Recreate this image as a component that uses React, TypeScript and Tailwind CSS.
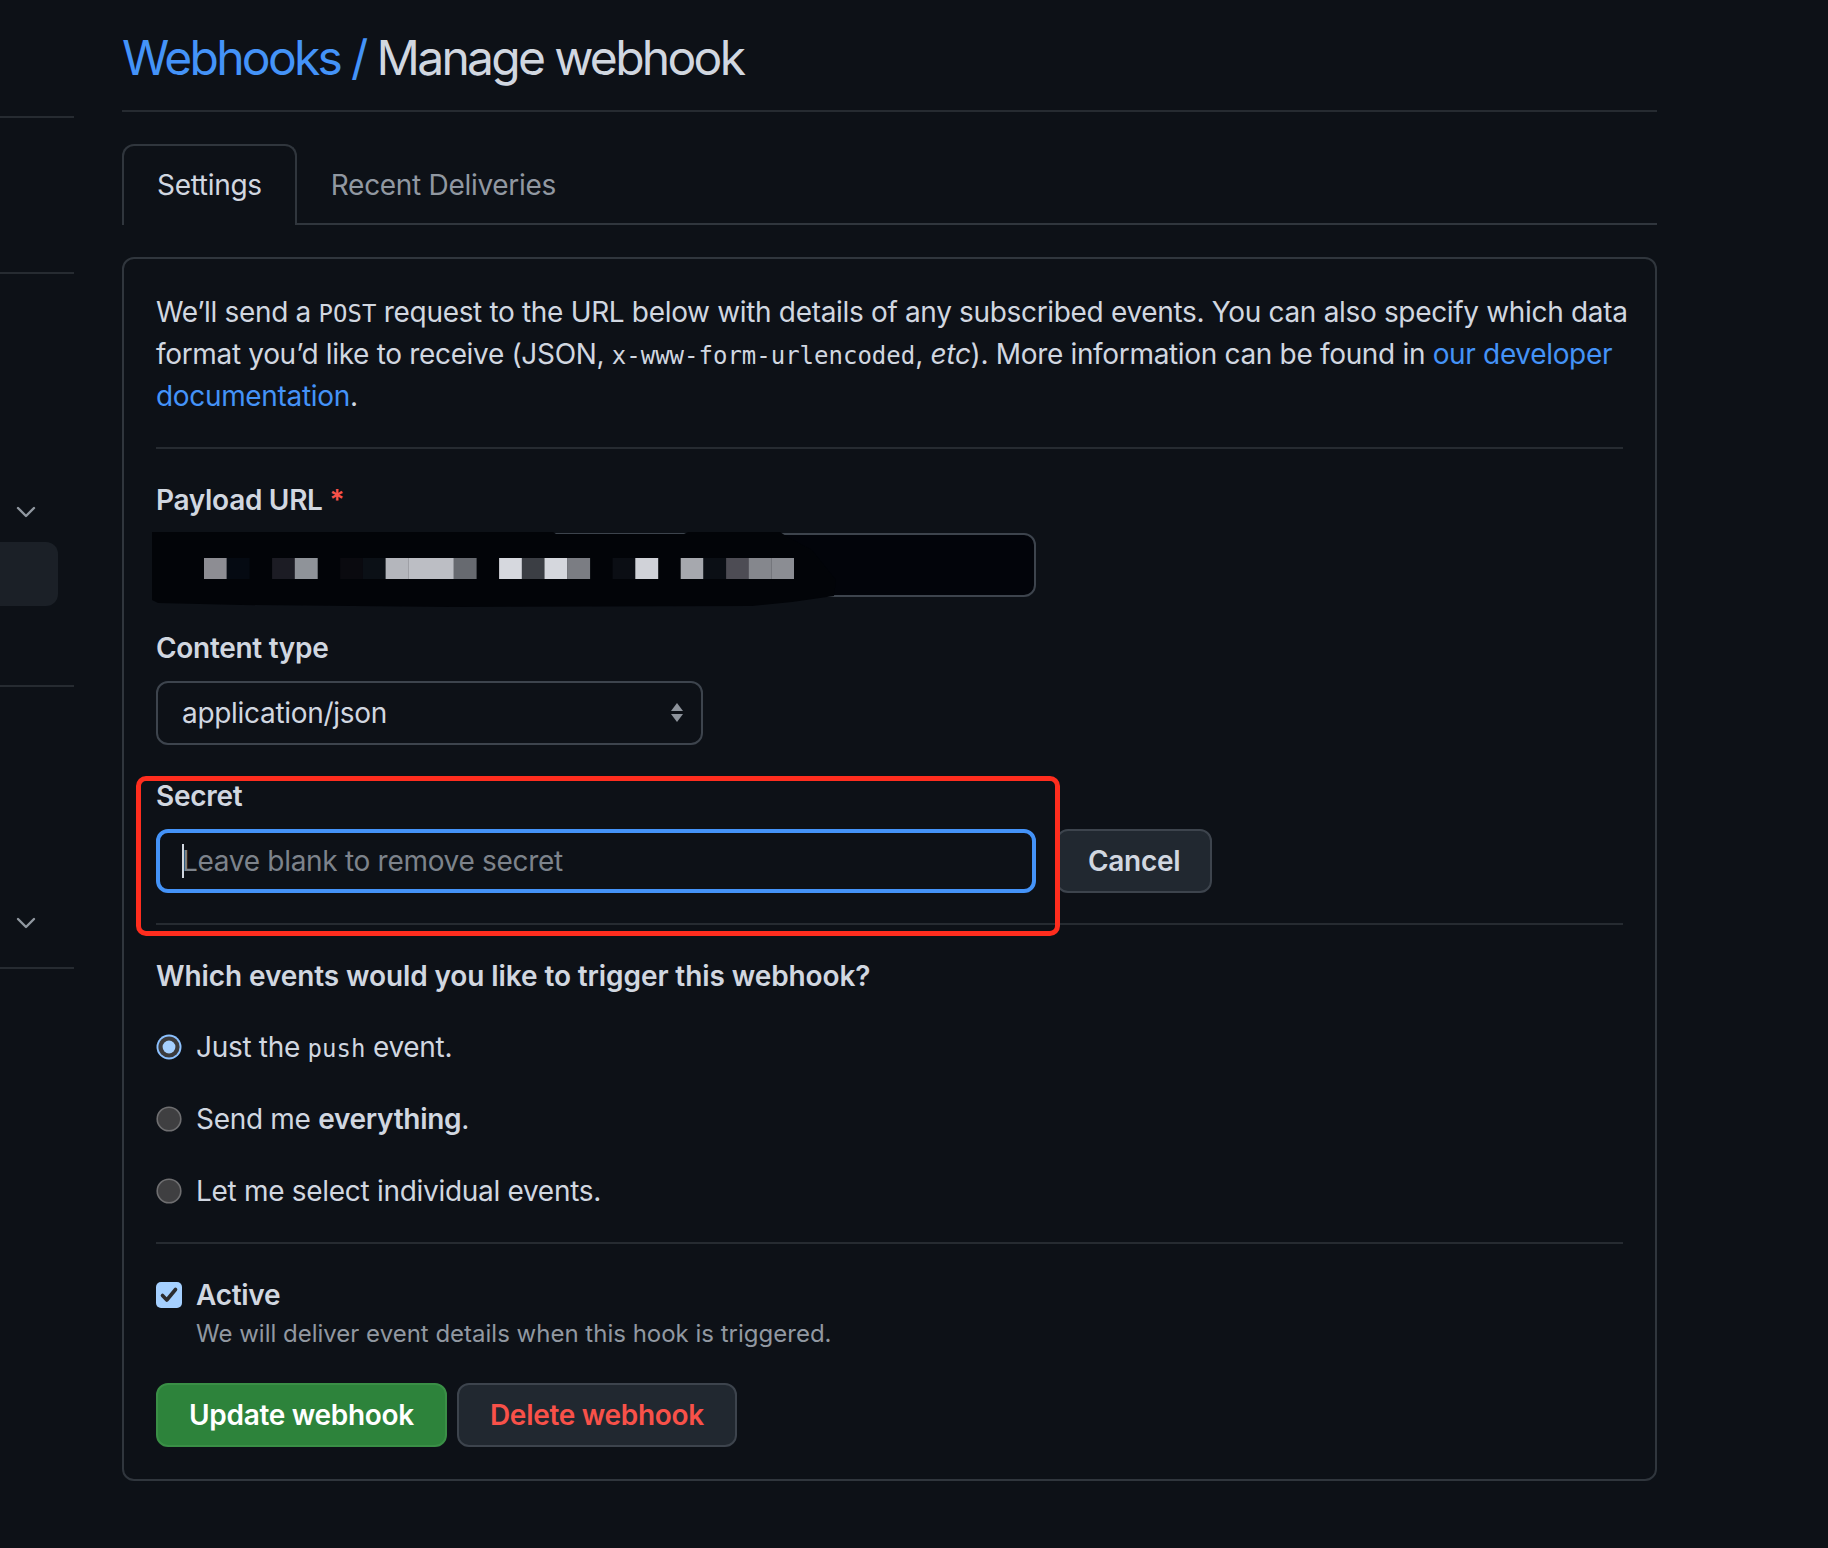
import React from 'react';

const blocks: [number, string][] = [
  [0, '#8d8d93'], [1, '#050a12'], [3, '#1c1c24'], [4, '#8f9399'], [6, '#0a0a0f'],
  [7, '#0b1016'], [8, '#b4b6bc'], [9, '#bcbec4'], [10, '#bcbec4'], [11, '#676a70'],
  [13, '#d6d8de'], [14, '#3b3e44'], [15, '#d5d7dd'], [16, '#7b7d83'], [18, '#0b0e14'],
  [19, '#d0d2d8'], [21, '#a6a8ae'], [22, '#0b0f15'], [23, '#4d4c54'], [24, '#85878d'],
  [25, '#8b8d93'],
];

const mono = { fontFamily: '"DejaVu Sans Mono", monospace' };

const Chevron = () => (
  <svg width="20" height="18" viewBox="0 0 20 18" className="ml-[16px] block">
    <path d="M2 5 L10 13 L18 5" fill="none" stroke="#9198a1" strokeWidth="2.4" strokeLinecap="round" strokeLinejoin="round" />
  </svg>
);

const Radio = ({ checked }: { checked?: boolean }) => (
  <svg width="26" height="26" viewBox="0 0 26 26" className="shrink-0">
    {checked ? (
      <>
        <circle cx="13" cy="13" r="12.5" fill="#8cc1ff" />
        <circle cx="13" cy="13" r="10.6" fill="#3b3b3d" />
        <circle cx="13" cy="13" r="6.4" fill="#a5d0ff" />
      </>
    ) : (
      <circle cx="13" cy="13" r="11.8" fill="#3f3f41" stroke="#6e6e70" strokeWidth="1.6" />
    )}
  </svg>
);

export default function App() {
  return (
    <div className="min-h-screen bg-[#0d1117] flex text-[#d1d7e0] tracking-[-0.3px]" style={{ fontFamily: 'Inter, "Noto Sans", sans-serif' }}>
      {/* clipped sidebar */}
      <aside className="w-[74px] shrink-0 overflow-hidden">
        <div className="mt-[116px] h-[2px] bg-[#262b31]" />
        <div className="mt-[154px] h-[2px] bg-[#262b31]" />
        <div className="mt-[229px]"><Chevron /></div>
        <div className="mt-[21px] h-[64px] w-[58px] rounded-r-[12px] bg-[#1b2027]" />
        <div className="mt-[79px] h-[2px] bg-[#262b31]" />
        <div className="mt-[227px]"><Chevron /></div>
        <div className="mt-[35px] h-[2px] bg-[#262b31]" />
      </aside>

      <main className="ml-[48px] w-[1535px] pb-[70px]">
        {/* Header */}
        <div className="pt-[22px] pb-[16px] border-b-2 border-[#262b31]">
          <h1 className="text-[48px] leading-[72px] font-normal tracking-[-2.7px]">
            <span className="text-[#4493f8]">Webhooks /</span> <span className="text-[#d1d7e0]">Manage webhook</span>
          </h1>
        </div>

        {/* Tabs */}
        <div className="mt-[32px] flex border-b-2 border-[#30363d] text-[28px] leading-[46px]">
          <div className="-mb-[2px] px-[33px] pt-[16px] pb-[17px] border-2 border-b-0 border-[#30363d] rounded-t-[12px] bg-[#0d1117] text-[#d1d7e0]">
            Settings
          </div>
          <div className="px-[32px] pt-[16px] pb-[15px] border-2 border-b-0 border-transparent text-[#9198a1]">
            Recent Deliveries
          </div>
        </div>

        {/* Card */}
        <div className="relative mt-[32px] border-2 border-[#30363d] rounded-[12px] p-[32px]">
          <p className="text-[28px] leading-[42px] whitespace-nowrap tracking-[-0.33px]">
            We’ll send a <code className="text-[24px] leading-none tracking-normal" style={mono}>POST</code> request to the URL below with details of any subscribed events. You can also specify which data
            <br />
            format you’d like to receive (JSON, <code className="text-[24px] leading-none tracking-normal" style={mono}>x-www-form-urlencoded</code>, <em>etc</em>). More information can be found in <span className="text-[#4493f8]">our developer</span>
            <br />
            <span className="text-[#4493f8]">documentation</span>.
          </p>

          <div className="mt-[30px] h-[2px] bg-[#262b31]" />

          {/* Payload URL */}
          <div className="mt-[30px]">
            <label className="block text-[28px] leading-[42px] font-semibold">
              Payload URL <span className="text-[#f85149]">*</span>
            </label>
            <div className="relative mt-[12px] w-[880px] h-[64px] rounded-[12px] border-2 border-[#3d444d] bg-[#02040a]">
              <svg className="absolute -left-[6px] -top-[5px]" width="720" height="80" viewBox="0 0 720 80">
                <path d="M0 2 L401 2 L404 4 L532 4 L536 2 L628 2 L634 6 L660 20 L684 50 L682 66 L640 72 L600 76 L300 77 L90 75 L6 73 L0 70 Z" fill="#020408" />
              </svg>
              <svg className="absolute left-[46px] top-[23px]" width="590" height="21" viewBox="0 0 590 21">
                {blocks.map(([n, c]) => (
                  <rect key={n} x={n * 22.7} y="0" width="22.9" height="21" fill={c} />
                ))}
              </svg>
            </div>
          </div>

          {/* Content type */}
          <div className="mt-[30px]">
            <label className="block text-[28px] leading-[42px] font-semibold">Content type</label>
            <div className="mt-[12px] w-[547px] h-[64px] rounded-[12px] border-2 border-[#3d444d] bg-[#0d1117] flex items-center justify-between pl-[24px] pr-[16px]">
              <span className="text-[28px]">application/json</span>
              <svg width="16" height="22" viewBox="0 0 16 22">
                <path d="M8 1 L14 9 L2 9 Z" fill="#8d939b" />
                <path d="M2 12 L14 12 L8 20 Z" fill="#8d939b" />
              </svg>
            </div>
          </div>

          {/* Secret */}
          <div className="mt-[30px]">
            <label className="block text-[28px] leading-[42px] font-semibold">Secret</label>
            <div className="mt-[12px] flex items-center">
              <div className="w-[880px] h-[64px] rounded-[12px] border-[4px] border-[#4493f8] bg-[#0d1117] flex items-center pl-[22px]">
                <span className="w-[2px] h-[34px] bg-[#d1d7e0] -mr-[2px]" />
                <span className="text-[28px] text-[#7d838b]">Leave blank to remove secret</span>
              </div>
              <button className="ml-[20px] h-[64px] px-[30px] rounded-[12px] border-2 border-[#3d444d] bg-[#212830] text-[28px] font-semibold text-[#d1d7e0]">
                Cancel
              </button>
            </div>
          </div>

          <div className="mt-[30px] h-[2px] bg-[#262b31]" />

          {/* Events */}
          <p className="mt-[30px] text-[28px] leading-[42px] font-semibold tracking-[-0.1px]">Which events would you like to trigger this webhook?</p>
          <div className="mt-[29px] flex flex-col gap-[30px] text-[28px] leading-[42px]">
            <div className="flex items-center gap-[14px]">
              <Radio checked />
              <span>Just the <code className="text-[24px] leading-none tracking-normal" style={mono}>push</code> event.</span>
            </div>
            <div className="flex items-center gap-[14px]">
              <Radio />
              <span>Send me <strong className="font-semibold">everything</strong>.</span>
            </div>
            <div className="flex items-center gap-[14px]">
              <Radio />
              <span>Let me select individual events.</span>
            </div>
          </div>

          <div className="mt-[30px] h-[2px] bg-[#262b31]" />

          {/* Active */}
          <div className="mt-[30px]">
            <div className="flex items-center gap-[14px]">
              <svg width="26" height="26" viewBox="0 0 26 26" className="shrink-0">
                <rect x="0" y="0" width="26" height="26" rx="5" fill="#a5d0ff" />
                <path d="M6.5 13.5 L10.8 18 L19.5 7.5" fill="none" stroke="#2c2c2e" strokeWidth="3.6" strokeLinecap="round" strokeLinejoin="round" />
              </svg>
              <span className="text-[28px] leading-[42px] font-semibold">Active</span>
            </div>
            <p className="ml-[40px] text-[24px] leading-[36px] text-[#9198a1] tracking-[0px]">We will deliver event details when this hook is triggered.</p>
          </div>

          <div className="mt-[31px] flex gap-[10px]">
            <button className="h-[64px] px-[31px] rounded-[12px] border-2 border-[#3a8f46] bg-[#2d833b] text-[28px] font-semibold text-white">
              Update webhook
            </button>
            <button className="h-[64px] px-[31px] rounded-[12px] border-2 border-[#3d444d] bg-[#212830] text-[28px] font-semibold text-[#f85149]">
              Delete webhook
            </button>
          </div>

          {/* red annotation around the Secret field */}
          <div className="absolute left-[12px] top-[517px] w-[924px] h-[160px] rounded-[10px] border-[5px] border-[#ff2d1e] pointer-events-none" />
        </div>
      </main>
    </div>
  );
}
